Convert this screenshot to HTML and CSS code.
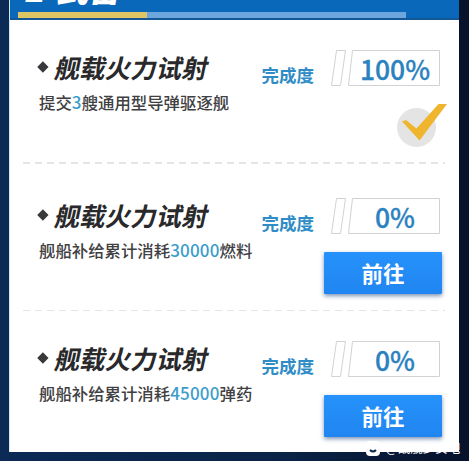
FILE: index.html
```
<!DOCTYPE html>
<html lang="zh-CN">
<head>
  <meta charset="UTF-8" />
  <meta name="viewport" content="width=device-width, initial-scale=1.0" />
  <title>武备</title>
  <link rel="stylesheet" href="styles.css">
</head>
<body>
  <div class="panel">
    <header class="panel-head">
      <h1><span class="num">2</span> <span>武备</span></h1>
      <div class="progress"><div class="progress-bar"></div></div>
    </header>

    <section class="task">
      <div class="info">
        <h2>舰载火力试射</h2>
        <p>提交<b>3</b>艘通用型导弹驱逐舰</p>
      </div>
      <div class="status">
        <div class="rate">
          <span class="label">完成度</span>
          <svg class="frame" width="111" height="37" viewBox="0 0 111 37">
            <path d="M6.500 .5H15.500L10.500 35.500H1.500Z M22.500 .5H109.500V35.500H18.500Z" />
          </svg>
          <span class="value">100%</span>
        </div>
        <svg class="done" width="52" height="46" viewBox="0 0 52 46">
          <circle cx="21.500" cy="24.500" r="19.500" fill="#e4e4e5" />
          <path d="M7 18.500L11 17L21.500 25.500L43.500 1H52L24.500 37.500L20 32.500Z" fill="#efb52c" />
        </svg>
      </div>
    </section>

    <section class="task">
      <div class="info">
        <h2>舰载火力试射</h2>
        <p>舰船补给累计消耗<b>30000</b>燃料</p>
      </div>
      <div class="status">
        <div class="rate">
          <span class="label">完成度</span>
          <svg class="frame" width="111" height="37" viewBox="0 0 111 37">
            <path d="M6.500 .5H15.500L10.500 35.500H1.500Z M22.500 .5H109.500V35.500H18.500Z" />
          </svg>
          <span class="value">0%</span>
        </div>
        <button>前往</button>
      </div>
    </section>

    <section class="task last">
      <div class="info">
        <h2>舰载火力试射</h2>
        <p>舰船补给累计消耗<b>45000</b>弹药</p>
      </div>
      <div class="status">
        <div class="rate">
          <span class="label">完成度</span>
          <svg class="frame" width="111" height="37" viewBox="0 0 111 37">
            <path d="M6.500 .5H15.500L10.500 35.500H1.500Z M22.500 .5H109.500V35.500H18.500Z" />
          </svg>
          <span class="value">0%</span>
        </div>
        <button>前往</button>
      </div>
    </section>
  </div>

  <div class="watermark">
    <svg width="14" height="15" viewBox="0 0 14 15">
      <rect x="0" y="0" width="14" height="15" rx="4" fill="#fff" />
      <path d="M4 9Q7 12 10 9" fill="none" stroke="#0a2a52" stroke-width="2" />
    </svg>
    <span>@战舰少女吧</span>
  </div>
</body>
</html>
```

FILE: styles.css
```
* {
  box-sizing: border-box;
}

body {
  margin: 0;
  width: 469px;
  height: 461px;
  padding: 0 10px 0 9px;
  overflow: hidden;
  font-family: "Noto Sans CJK SC", sans-serif;
  background: linear-gradient(to right, #0b2a55, #0a2347 60%, #07122c 97%);
}

h1, h2, p {
  margin: 0;
}

.panel {
  height: 452px;
  background: #fff;
  border-left: 1px solid #d5e7f5;
}

.panel-head {
  height: 20px;
  padding-left: 8px;
  overflow: hidden;
  background: #0a68bb;
  border-bottom: 2px solid #145795;
}

h1 {
  display: flex;
  align-items: flex-end;
  gap: 13px;
  height: 12px;
  padding-left: 6px;
  color: #fff;
  font-size: 32px;
  font-weight: 900;
  line-height: 40px;
  transform: translateY(-4px) skewX(-10deg);
}

.progress {
  width: 388px;
  height: 6px;
  background: #6da6dc;
}

.progress-bar {
  width: 129px;
  height: 6px;
  background: #dfc564;
}

.task {
  display: flex;
  justify-content: space-between;
  height: 148px;
  padding: 30px 12px 0 29px;
  background: repeating-linear-gradient(to right, #e4e4e4 0 7px, #fff 7px 12px) 13px 142px / 422px 2px no-repeat;
}

.task:nth-of-type(2) {
  height: 143px;
}

.last {
  height: 140px;
  background: none;
}

h2 {
  display: flex;
  align-items: center;
  gap: 9px;
  height: 33px;
  color: #29292b;
  font-size: 25.5px;
  font-weight: 700;
  white-space: nowrap;
  transform: skewX(-12deg);
}

h2::before {
  content: "";
  width: 8px;
  height: 8px;
  background: #39393b;
  transform: skewX(12deg) rotate(45deg);
}

p {
  margin-top: 7px;
  color: #404042;
  font-size: 16.4px;
  font-weight: 500;
  line-height: 24px;
  white-space: nowrap;
}

p b {
  color: #3c9dcb;
  font-weight: 500;
  font-size: 17px;
  letter-spacing: .2px;
}

.status {
  display: flex;
  flex-direction: column;
  align-items: flex-end;
}

.rate {
  position: relative;
  display: flex;
  align-items: flex-start;
  gap: 16px;
  height: 36px;
  margin-right: 6px;
}

.label {
  padding-top: 12px;
  color: #2f8cc6;
  font-size: 17.5px;
  font-weight: 700;
  line-height: 26px;
}

.frame path {
  fill: none;
  stroke: #d0d2d6;
}

.value {
  position: absolute;
  right: 1px;
  width: 90px;
  color: #2b82bf;
  font-size: 26.5px;
  font-weight: 500;
  -webkit-text-stroke: .3px #2b82bf;
  line-height: 37px;
  text-align: center;
}

button {
  width: 118px;
  height: 42px;
  margin: 18px 5px 0 0;
  padding: 0;
  border: 0;
  border-radius: 1px;
  background: linear-gradient(#2692fb, #2085f0);
  box-shadow: 0 2px 4px rgba(20, 60, 120, .55);
  color: #fff;
  font-family: inherit;
  font-size: 21.5px;
  font-weight: 700;
  line-height: 42px;
}

.done {
  margin: 17px 0 0;
}

.watermark {
  position: absolute;
  left: 366px;
  top: 439px;
  display: flex;
  align-items: center;
  gap: 6px;
  color: #fff;
  font-size: 12.5px;
  line-height: 18px;
  white-space: nowrap;
}
```
